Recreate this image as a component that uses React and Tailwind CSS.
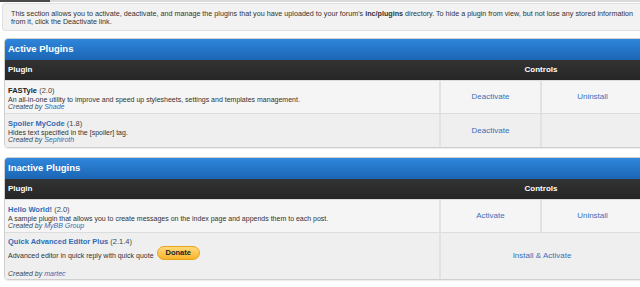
import React from 'react';

const font = { fontFamily: '"Liberation Sans", Tahoma, Arial, sans-serif' };

const PluginRow = ({ name, version, desc, author, nameColor, bg, children, donate, h }) => (
  <div className={`grid grid-cols-[434px_101px_1fr] border-t border-[#dcdcdc] ${bg} ${h}`}>
    <div className={`px-[3px] ${donate ? 'pt-[4px]' : 'pt-[5px]'}`}>
      <div className="text-[7.5px] leading-[10px]">
        <span className={`font-bold ${nameColor}`}>{name}</span>{' '}
        <span className="text-[#444]">({version})</span>
      </div>
      {donate ? (
        <div className="flex items-end mt-[-1px] mb-[10px]">
          <span className="text-[7px] leading-[7px] text-[#333] mb-[1px]">{desc}</span>
          <span className="ml-[3px] rounded-full bg-gradient-to-b from-[#ffd977] to-[#f9b424] border border-[#e6a41e] text-[7.5px] font-bold text-[#222] px-[8px] py-[2px] leading-[8px]">
            Donate
          </span>
        </div>
      ) : (
        <div className="text-[7px] leading-[7px] text-[#333]">{desc}</div>
      )}
      <div className="text-[7px] leading-[7px] italic text-[#444]">
        Created by <span className="text-[#2f6cb6]">{author}</span>
      </div>
    </div>
    {children}
  </div>
);

const Cell = ({ children, span }) => (
  <div
    className={`flex items-center justify-center border-l-2 border-[#e2e2e2] text-[8px] text-[#3a6fb9] ${span ? 'col-span-2' : ''}`}
  >
    {children}
  </div>
);

const Panel = ({ title, children }) => (
  <div className="ml-[4px] w-[640px] rounded-[4px] border border-[#cfcfcf] shadow-[0_1px_1px_rgba(0,0,0,0.08)] overflow-hidden">
    <div className="h-[21px] bg-gradient-to-b from-[#2f86db] to-[#1b66b4] flex items-center px-[3px] text-[9.5px] font-bold text-white">
      {title}
    </div>
    <div className="grid grid-cols-[434px_1fr] h-[20px] bg-gradient-to-b from-[#333] to-[#262626] text-[8px] font-bold text-white items-center">
      <div className="px-[3px]">Plugin</div>
      <div className="text-center">Controls</div>
    </div>
    {children}
  </div>
);

export default function App() {
  return (
    <div className="w-[640px] h-[287px] overflow-hidden bg-white" style={font}>
      <div className="flex h-[2px]">
        <div className="w-[50px] bg-[#4a4a4a]" />
        <div className="flex-1 bg-[#dadada]" />
      </div>
      <div className="ml-[2px] mt-[1px] w-[650px] h-[28px] bg-[#f2f2f2] border border-[#e0e0e0] rounded-[3px] pl-[8px] pt-[6px] text-[7.2px] leading-[8px] text-[#333] whitespace-nowrap">
        <div>
          This section allows you to activate, deactivate, and manage the plugins that you have uploaded to your forum's{' '}
          <b>inc/plugins</b> directory. To hide a plugin from view, but not lose any stored information
        </div>
        <div>from it, click the Deactivate link.</div>
      </div>

      <div className="mt-[7px]">
        <Panel title="Active Plugins">
          <PluginRow
            name="FASTyle"
            version="2.0"
            nameColor="text-[#222]"
            desc="An all-in-one utility to improve and speed up stylesheets, settings and templates management."
            author="Shade"
            bg="bg-[#f5f5f5]"
            h="h-[33px]"
          >
            <Cell>Deactivate</Cell>
            <Cell>Uninstall</Cell>
          </PluginRow>
          <PluginRow
            name="Spoiler MyCode"
            version="1.8"
            nameColor="text-[#2f6cb6]"
            desc="Hides text specified in the [spoiler] tag."
            author="Sephiroth"
            bg="bg-[#efefef]"
            h="h-[34px]"
          >
            <Cell>Deactivate</Cell>
            <Cell />
          </PluginRow>
        </Panel>
      </div>

      <div className="mt-[9px]">
        <Panel title="Inactive Plugins">
          <PluginRow
            name="Hello World!"
            version="2.0"
            nameColor="text-[#2f6cb6]"
            desc="A sample plugin that allows you to create messages on the index page and appends them to each post."
            author="MyBB Group"
            bg="bg-[#f5f5f5]"
            h="h-[33px]"
          >
            <Cell>Activate</Cell>
            <Cell>Uninstall</Cell>
          </PluginRow>
          <PluginRow
            name="Quick Advanced Editor Plus"
            version="2.1.4"
            nameColor="text-[#2f6cb6]"
            desc="Advanced editor in quick reply with quick quote"
            author="martec"
            bg="bg-[#efefef]"
            h="h-[47px]"
            donate
          >
            <Cell span>Install &amp; Activate</Cell>
          </PluginRow>
        </Panel>
      </div>
    </div>
  );
}
